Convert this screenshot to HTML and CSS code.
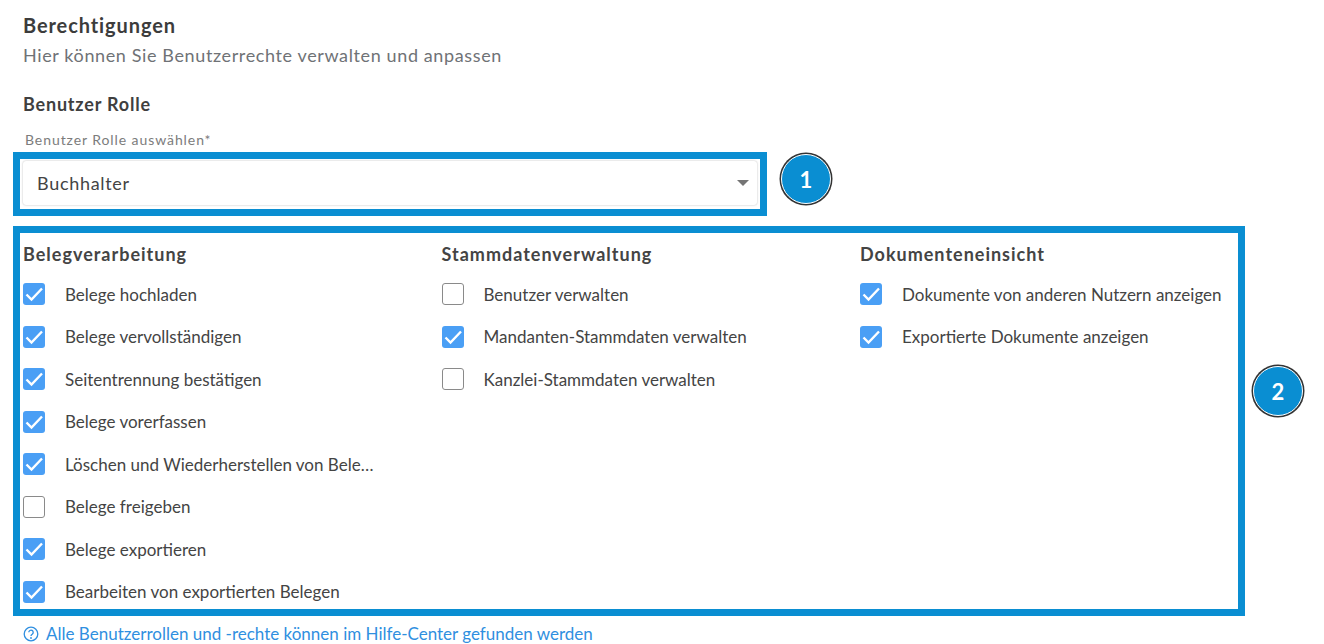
FILE: index.html
```html
<!DOCTYPE html>
<html lang="de">
<head>
  <meta charset="UTF-8">
  <meta name="viewport" content="width=device-width, initial-scale=1.0">
  <title>Berechtigungen</title>
  <link rel="stylesheet" href="styles.css">
</head>
<body>
  <svg class="defs" width="0" height="0">
    <symbol id="tick" viewBox="0 0 22 22">
      <path d="M3.5 11.5l5 5 10.5-11" fill="none" stroke="#fff" stroke-width="2.4"/>
    </symbol>
  </svg>

  <div class="page">
    <h1>Berechtigungen</h1>
    <p class="subtitle">Hier können Sie Benutzerrechte verwalten und anpassen</p>
    <h2>Benutzer Rolle</h2>
    <div class="field-label">Benutzer Rolle auswählen*</div>

    <div class="mark mark-role">
      <div class="select">
        <span>Buchhalter</span>
        <span class="arrow"></span>
      </div>
      <span class="badge badge-one">1</span>
    </div>

    <div class="mark mark-rights">
      <div class="col">
        <h3>Belegverarbeitung</h3>
        <div class="row"><span class="box on"><svg><use href="#tick"/></svg></span>Belege hochladen</div>
        <div class="row"><span class="box on"><svg><use href="#tick"/></svg></span>Belege vervollständigen</div>
        <div class="row"><span class="box on"><svg><use href="#tick"/></svg></span>Seitentrennung bestätigen</div>
        <div class="row"><span class="box on"><svg><use href="#tick"/></svg></span>Belege vorerfassen</div>
        <div class="row"><span class="box on"><svg><use href="#tick"/></svg></span>Löschen und Wiederherstellen von Bele…</div>
        <div class="row"><span class="box"></span>Belege freigeben</div>
        <div class="row"><span class="box on"><svg><use href="#tick"/></svg></span>Belege exportieren</div>
        <div class="row"><span class="box on"><svg><use href="#tick"/></svg></span>Bearbeiten von exportierten Belegen</div>
      </div>
      <div class="col">
        <h3>Stammdatenverwaltung</h3>
        <div class="row"><span class="box"></span>Benutzer verwalten</div>
        <div class="row"><span class="box on"><svg><use href="#tick"/></svg></span>Mandanten-Stammdaten verwalten</div>
        <div class="row"><span class="box"></span>Kanzlei-Stammdaten verwalten</div>
      </div>
      <div class="col">
        <h3>Dokumenteneinsicht</h3>
        <div class="row"><span class="box on"><svg><use href="#tick"/></svg></span>Dokumente von anderen Nutzern anzeigen</div>
        <div class="row"><span class="box on"><svg><use href="#tick"/></svg></span>Exportierte Dokumente anzeigen</div>
      </div>
      <span class="badge badge-two">2</span>
    </div>

    <div class="help">
      <svg class="help-icon" viewBox="0 0 16 16">
        <circle cx="8" cy="8" r="6.8" fill="none" stroke="#2f8fe0" stroke-width="1.3"/>
        <path d="M5.8 6.3a2.2 2.2 0 1 1 3.4 1.9c-.8.5-1.2.9-1.2 1.8" fill="none" stroke="#2f8fe0" stroke-width="1.3"/>
        <circle cx="8" cy="12" r=".9" fill="#2f8fe0"/>
      </svg>
      Alle Benutzerrollen und -rechte können im Hilfe-Center gefunden werden
    </div>
  </div>
</body>
</html>
```

FILE: styles.css
```css
body {
  margin: 0;
  background: #fff;
  font-family: Lato, "Open Sans", sans-serif;
  color: #444;
  overflow: hidden;
}
.defs {
  position: absolute;
}
.page {
  padding: 14px 0 0 13px;
}
h1 {
  margin: 0 0 0 10px;
  font-size: 20px;
  line-height: 22px;
  font-weight: 700;
  letter-spacing: 0.9px;
  color: #3c3c3c;
}
.subtitle {
  margin: 8px 0 0 10px;
  font-size: 18px;
  line-height: 22px;
  letter-spacing: 0.62px;
  color: #6f7276;
}
h2 {
  margin: 28px 0 0 10px;
  font-size: 18px;
  line-height: 20px;
  font-weight: 700;
  letter-spacing: 0.8px;
  color: #3f3f3f;
}
.field-label {
  margin: 18px 0 0 12px;
  font-size: 14px;
  line-height: 16px;
  letter-spacing: 0.92px;
  color: #7c7c7c;
}
.mark {
  position: relative;
  box-sizing: border-box;
  border: 7px solid #0a8ed2;
}
.mark-role {
  width: 754px;
  height: 64px;
  margin-top: 4px;
  padding: 2px 3px 4px 3px;
}
.select {
  height: 100%;
  box-sizing: border-box;
  display: flex;
  align-items: center;
  justify-content: space-between;
  padding: 0 8px 0 14px;
  font-size: 18px;
  letter-spacing: 0.7px;
  color: #444;
  border-radius: 3px;
  box-shadow: 0 0 2px rgba(0, 0, 0, 0.3);
}
.arrow {
  border-left: 6px solid transparent;
  border-right: 6px solid transparent;
  border-top: 6px solid #757575;
}
.mark-rights {
  width: 1232px;
  height: 390px;
  margin-top: 10px;
  padding: 3px 3px;
  display: grid;
  grid-template-columns: repeat(3, 418.5px);
}
h3 {
  margin: 0;
  height: 37px;
  font-size: 18px;
  line-height: 36px;
  font-weight: 700;
  letter-spacing: 1px;
  color: #444;
}
.row {
  display: flex;
  align-items: center;
  height: 42.5px;
  font-size: 17px;
  color: #444;
  white-space: nowrap;
}
.box {
  flex: none;
  box-sizing: border-box;
  width: 22px;
  height: 22px;
  margin-right: 20px;
  border: 1px solid #8a8a8a;
  border-radius: 3px;
}
.box.on {
  background: #4a9ff5;
  border: none;
}
.box svg {
  display: block;
  width: 22px;
  height: 22px;
}
.badge {
  position: absolute;
  box-sizing: border-box;
  width: 50px;
  height: 50px;
  display: flex;
  align-items: center;
  justify-content: center;
  border-radius: 50%;
  background: #0a8ed2;
  border: 1px solid #fff;
  box-shadow: 0 0 0 1.5px #333;
  color: #fff;
  font-size: 22px;
  font-weight: 700;
}
.badge-one {
  left: 761px;
  top: -5px;
}
.badge-two {
  left: 1233px;
  top: 133px;
}
.help {
  display: flex;
  align-items: center;
  gap: 7px;
  margin: 8px 0 0 10px;
  font-size: 17px;
  line-height: 20px;
  color: #2f8fe0;
}
.help-icon {
  width: 16px;
  height: 16px;
}
```
